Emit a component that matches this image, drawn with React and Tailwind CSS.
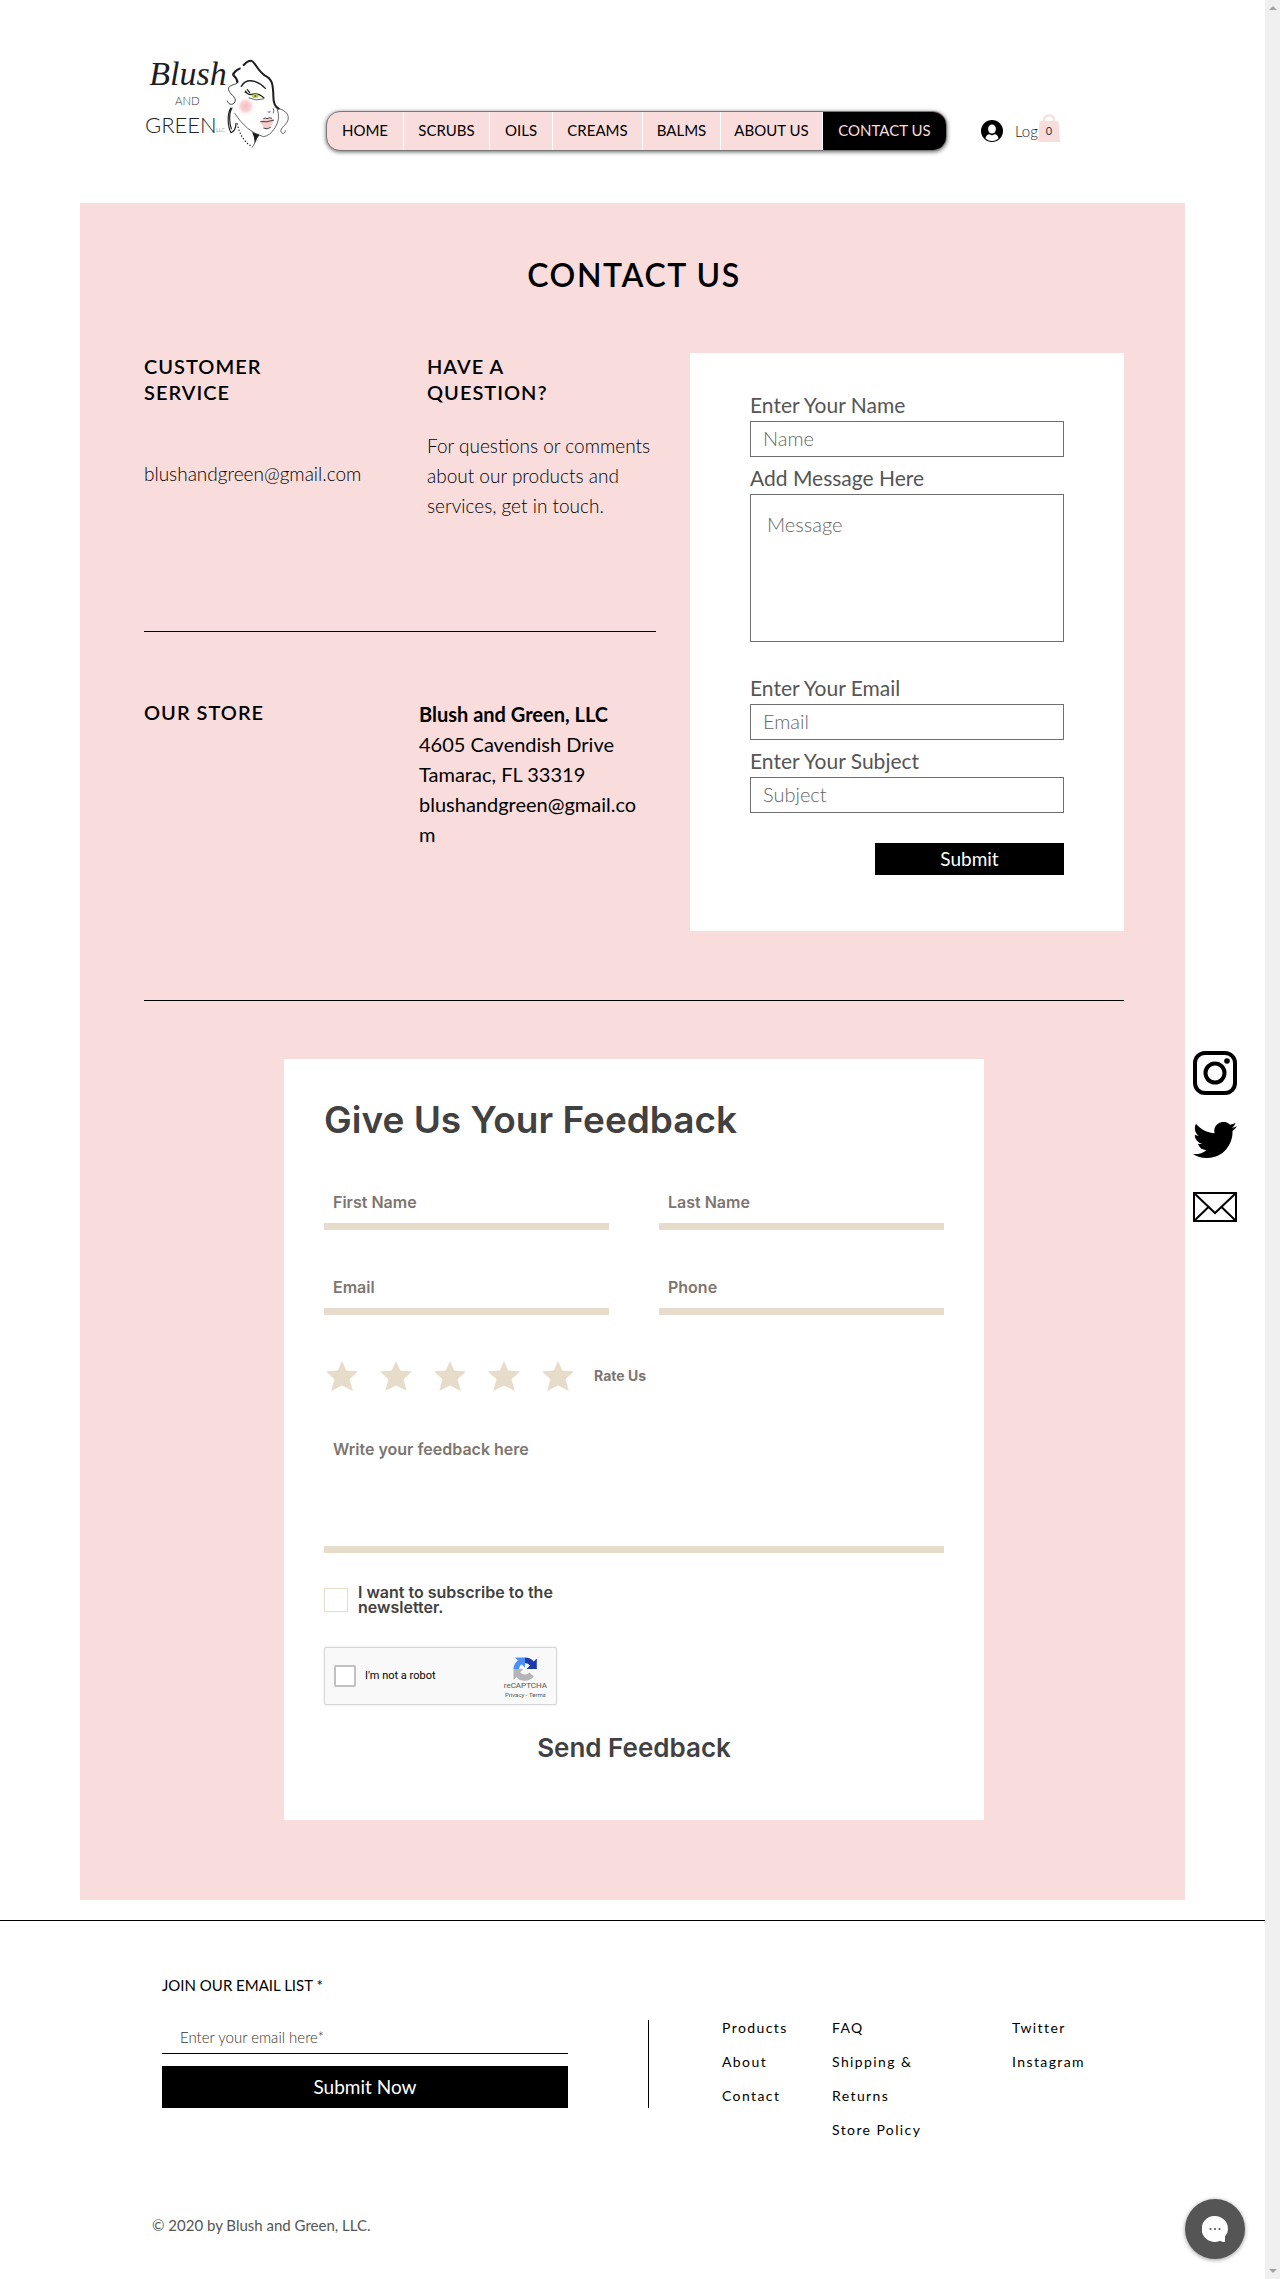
import React from "react";

const futura = "font-['Lato','Liberation_Sans',sans-serif]";
const poppins = "font-['Inter','Liberation_Sans',sans-serif]";

function Logo() {
  return (
    <svg viewBox="0 0 540 360" className="h-[120px] w-[180px] shrink-0" role="img" aria-label="Blush and Green LLC">
      <defs>
        <radialGradient id="blush">
          <stop offset="0" stopColor="#f6b9bf" />
          <stop offset="0.5" stopColor="#f9d3d6" />
          <stop offset="1" stopColor="#ffffff" stopOpacity="0" />
        </radialGradient>
      </defs>
      <text x="58" y="134" fontFamily="'Liberation Serif', serif" fontStyle="italic" fontSize="102" fill="#1d1d1d">Blush</text>
      <text x="135" y="196" fontFamily="Lato, sans-serif" fontWeight="300" fontSize="34" fill="#333">AND</text>
      <text x="45" y="279" fontFamily="Lato, sans-serif" fontWeight="300" fontSize="66" fill="#222">GREEN</text>
      <text x="258" y="277" fontFamily="Lato, sans-serif" fontWeight="300" fontSize="17" fill="#444">LLC</text>
      <circle cx="347" cy="199" r="30" fill="url(#blush)" />
      <g fill="none" stroke="#1d1d1d" strokeLinecap="round" strokeLinejoin="round">
        <path d="M341 75 Q352 62 363 62 C376 66 382 92 404 106 C430 118 428 140 430 162 C429 188 434 200 446 206" strokeWidth="6" />
        <path d="M331 84 C312 92 305 100 308 105 C316 112 324 120 324 126 C318 136 300 133 296 143 C292 158 314 166 316 180 C315 196 296 198 292 183" strokeWidth="2.5" />
        <path d="M329 86 Q312 94 310 106 Q322 116 322 127" strokeWidth="6" />
        <path d="M334 139 Q346 117 374 124 Q392 130 406 145" strokeWidth="4" />
        <path d="M347 153 Q352 164 362 164 Q384 156 402 174 M354 161 L345 156 M359 158 L352 149" strokeWidth="3.5" />
        <path d="M357 174 Q378 184 400 177" strokeWidth="2" />
        <path d="M446 206 C468 210 478 226 474 240 C468 258 450 262 453 276 C458 284 466 280 466 272" strokeWidth="2" />
        <path d="M442 208 Q452 236 436 262 Q420 288 400 290 Q350 276 314 220" strokeWidth="2" />
        <path d="M302 204 C290 226 294 262 303 278 M306 204 C296 220 298 250 304 266 M303 278 Q318 272 318 250" strokeWidth="3.5" />
        <path d="M414 216 Q420 220 421 214 M430 206 Q434 212 430 219" strokeWidth="2" />
        <path d="M322 252 Q332 300 366 320" strokeWidth="4" strokeDasharray="0.5 9" />
        <path d="M384 282 Q380 304 367 322" strokeWidth="2" />
      </g>
      <path d="M366 276 Q386 284 388 286 Q380 294 374 310 Q374 290 366 276Z" fill="#1d1d1d" />
      <ellipse cx="376" cy="168" rx="10" ry="6" fill="#b5d34f" />
      <circle cx="376" cy="168" r="3" fill="#5d6b2c" />
      <path d="M391 244 Q402 233 411 238 Q420 230 432 240 Q424 266 408 266 Q397 262 391 244Z" fill="#f5cdcb" />
      <path d="M391 245 Q410 248 432 240 M400 236 Q406 232 411 236 Q418 231 426 235 M400 264 Q412 270 422 262" fill="none" stroke="#1d1d1d" strokeWidth="2.5" />
    </svg>
  );
}

const navItems = [
  ["HOME", "w-[77px]"],
  ["SCRUBS", "w-[86px]"],
  ["OILS", "w-[63px]"],
  ["CREAMS", "w-[90px]"],
  ["BALMS", "w-[78px]"],
  ["ABOUT US", "w-[102px]"],
];

function Header() {
  return (
    <header className="mx-auto flex h-[203px] max-w-[1105px] pt-10 pl-[50px]">
      <a href="#home"><Logo /></a>
      <nav className="mt-[71px] ml-4 flex h-10 shrink-0 overflow-hidden rounded-[14px] border border-[#777] bg-[#f9dddd] text-[15px] shadow-[0_1px_4px_rgba(0,0,0,0.6)]">
        {navItems.map(([label, width]) => (
          <a key={label} href="#" className={`flex items-center justify-center border-r border-white pb-0.5 text-black ${width}`}>{label}</a>
        ))}
        <a href="#" aria-current="page" className="flex w-[123px] items-center justify-center bg-black pb-0.5 text-[#f9dddd]">CONTACT US</a>
      </nav>
      <button type="button" className="mt-[80px] ml-[34px] flex h-[22px] items-center gap-3 text-[15px] font-light text-[#222]">
        <svg viewBox="0 0 22 22" className="size-[22px]">
          <circle cx="11" cy="11" r="11" fill="#000" />
          <ellipse cx="11" cy="9" rx="3.9" ry="4.6" fill="#fff" />
          <path d="M4.5 18.5 Q5 14.5 8.6 14.3 Q11 16 13.4 14.3 Q17 14.5 17.5 18.5 Q14.5 21 11 21 Q7.500 21 4.500 18.500Z" fill="#fff" />
        </svg>
        Log
      </button>
      <button type="button" aria-label="Cart, 0 items" className="mt-[74px] h-[29px] w-[22px]">
        <svg viewBox="0 0 22 29" className="h-[29px] w-[22px]">
          <path d="M6 9 V6 Q6 1.500 11 1.500 Q16 1.500 16 6 V9" fill="none" stroke="#f9dddd" strokeWidth="2" />
          <path d="M1.500 7 H20.500 L22 28 H0Z" fill="#f9dddd" />
          <text x="11" y="21" textAnchor="middle" fontSize="11" fontFamily="Lato, sans-serif" fill="#333">0</text>
        </svg>
      </button>
    </header>
  );
}

const fieldBox = "block w-full border border-[#6f6f6f] bg-white font-light text-[#333] placeholder:text-[#666]";

function Field({ id, label, placeholder, className = "" }) {
  return (
    <div className={className}>
      <label htmlFor={id} className="mb-0.5 block text-[21px] leading-7 text-[#555]">{label}</label>
      <input id={id} placeholder={placeholder} className={`h-9 px-3 pb-0.5 text-[20px] ${fieldBox}`} />
    </div>
  );
}

function ContactForm() {
  return (
    <form className="flex w-[434px] shrink-0 flex-col bg-white px-[60px] pt-[38px] pb-14">
      <Field id="name" label="Enter Your Name" placeholder="Name" />
      <label htmlFor="message" className="mt-[7px] mb-0.5 block text-[21px] leading-7 text-[#555]">Add Message Here</label>
      <textarea id="message" placeholder="Message" className={`h-[148px] resize-none px-4 pt-[15px] text-[20px] leading-7 ${fieldBox}`} />
      <Field id="email" label="Enter Your Email" placeholder="Email" className="mt-8" />
      <Field id="subject" label="Enter Your Subject" placeholder="Subject" className="mt-[7px]" />
      <button type="button" className="mt-[30px] h-8 w-[189px] self-end bg-black text-[19px] leading-7 text-white">Submit</button>
    </form>
  );
}

function LineInput({ label }) {
  return (
    <input aria-label={label} placeholder={label} className="h-[47px] w-full border-b-[7px] border-[#e6dcc9] px-[9px] pb-0.5 text-[16px] font-semibold placeholder:text-[#7d756f]" />
  );
}

function Recaptcha() {
  return (
    <div className="mt-8 flex h-[58px] w-[233px] items-center rounded-[2px] border border-[#d6d6d6] bg-[#f9f9f9] pr-[9px] pl-[9px] font-['Roboto',sans-serif] shadow-[0_0_3px_rgba(0,0,0,0.1)]">
      <label className="flex items-center gap-[9px] text-[11px] text-black">
        <input type="checkbox" className="size-[22px] appearance-none rounded-[2px] border-2 border-[#c1c1c1] bg-white" />
        I'm not a robot
      </label>
      <div className="ml-auto flex flex-col items-center text-[#555]">
        <svg viewBox="0 0 24 24" className="mt-1 size-6">
          <path d="M12 0.500 A11.500 11.500 0 0 1 20.800 4.500 L23.800 1.600 V12 H13.500 L17 8.500 A6.500 6.500 0 0 0 12 6Z" fill="#1c3aa9" />
          <path d="M12 0.500 H2 L4.800 3.400 A11.500 11.500 0 0 0 0.500 12 H6 A6 6 0 0 1 8.500 7.200 L12 10.700Z" fill="#4a90f5" />
          <path d="M0.500 12 H10.500 L7.200 15.200 A6.200 6.200 0 0 0 16.500 15.500 L20.800 19.500 A11.500 11.500 0 0 1 3.600 20.200 L0.500 22.800Z" fill="#b4b4b4" />
        </svg>
        <span className="text-[8px] leading-[10px]">reCAPTCHA</span>
        <span className="text-[6px] leading-[8px]"><a href="#">Privacy</a> - <a href="#">Terms</a></span>
      </div>
    </div>
  );
}

function FeedbackForm() {
  return (
    <form className={`mx-auto mt-[58px] max-w-[700px] bg-white px-10 pt-[39px] pb-14 text-[#414141] ${poppins}`}>
      <h2 className="text-[37px] leading-[44px] font-semibold">Give Us Your Feedback</h2>
      <div className="mt-[41px] grid grid-cols-2 gap-x-[50px] gap-y-[38px]">
        <LineInput label="First Name" />
        <LineInput label="Last Name" />
        <LineInput label="Email" />
        <LineInput label="Phone" />
      </div>
      <div className="mt-[46px] flex items-center">
        {[1, 2, 3, 4, 5].map((n) => (
          <button key={n} type="button" aria-label={`${n} stars`} className="mr-[18px] h-[30px] w-9">
            <svg viewBox="0 0 36 30" className="h-[30px] w-9">
              <path d="M18 0 L22.300 9.600 L34 10.500 L25.500 18.200 L28.800 30 L18 24.500 L7.200 30 L10.500 18.200 L2 10.500 L13.700 9.600Z" fill="#e6dcc9" />
            </svg>
          </button>
        ))}
        <span className="text-[14px] leading-5 font-bold text-[#7d756f]">Rate Us</span>
      </div>
      <textarea aria-label="Write your feedback here" placeholder="Write your feedback here" className="mt-[43px] block h-[119px] w-full resize-none border-b-[7px] border-[#e6dcc9] px-[9px] pt-[5px] text-[16px] leading-5 font-semibold placeholder:text-[#7d756f]" />
      <label className="mt-8 flex w-[250px] items-center gap-[10px] text-[16px] leading-[15px] font-semibold">
        <input type="checkbox" className="size-6 shrink-0 appearance-none border border-[#e6dcc9] bg-white" />
        I want to subscribe to the newsletter.
      </label>
      <Recaptcha />
      <button type="button" className="mx-auto mt-[27px] block text-[26px] leading-8 font-semibold">Send Feedback</button>
    </form>
  );
}

function ContactSection() {
  const heading = "text-[20px] leading-[26px] font-semibold tracking-wider";
  return (
    <main className="mx-auto max-w-[1105px] bg-[#f9dddd] pt-[52px] pr-[61px] pb-20 pl-16 text-black">
      <h1 className="text-center text-[32px] leading-10 font-semibold tracking-wider">CONTACT US</h1>
      <div className="mt-[58px] flex gap-[34px]">
        <div className="flex-1">
          <section className="grid h-[278px] grid-cols-[283px_1fr]">
            <div>
              <h2 className={`w-[150px] ${heading}`}>CUSTOMER SERVICE</h2>
              <a href="#" className="mt-[54px] block text-[19px] leading-[30px] font-light">blushandgreen@gmail.com</a>
            </div>
            <div>
              <h2 className={`w-[150px] ${heading}`}>HAVE A QUESTION?</h2>
              <p className="mt-[26px] text-[19px] leading-[30px] font-light">
                For questions or comments<br />about our products and<br />services, get in touch.
              </p>
            </div>
          </section>
          <hr className="border-black" />
          <section className="mt-[67px] grid grid-cols-[275px_1fr]">
            <h2 className={heading}>OUR STORE</h2>
            <address className="w-[228px] text-[20px] leading-[30px] not-italic">
              <strong>Blush and Green, LLC</strong><br />
              4605 Cavendish Drive<br />
              Tamarac, FL 33319<br />
              <a href="#" className="break-all">blushandgreen@gmail.com</a>
            </address>
          </section>
        </div>
        <ContactForm />
      </div>
      <hr className="mt-[69px] border-black" />
      <FeedbackForm />
    </main>
  );
}

const linkColumns = [
  { items: ["Products", "About", "Contact"], width: "w-[110px]" },
  { items: ["FAQ", "Shipping & Returns", "Store Policy"], width: "w-[180px] pr-[70px]" },
  { items: ["Twitter", "Instagram"], width: "w-[110px]" },
];

function Footer() {
  return (
    <footer className="mt-5 border-t border-black pb-11">
      <div className="mx-auto flex max-w-[1105px] pt-[54px] pl-[82px]">
        <form className="w-[406px]">
          <label htmlFor="join" className="block text-[15px] leading-5 text-black">JOIN OUR EMAIL LIST *</label>
          <input id="join" placeholder="Enter your email here*" className="mt-[27px] block h-8 w-full border-b border-black px-[18px] pb-0.5 text-[15px] font-light placeholder:text-[#333]" />
          <button type="button" className="mt-3 h-[42px] w-full bg-black text-[19px] leading-7 text-white">Submit Now</button>
        </form>
        <div className="mt-[45px] ml-[80px] h-[88px] w-px bg-black" />
        <nav className="mt-9 ml-[73px] flex text-[14px] leading-[34px] tracking-widest text-black">
          {linkColumns.map((col) => (
            <ul key={col.items[0]} className={col.width}>
              {col.items.map((item) => (
                <li key={item}><a href="#">{item}</a></li>
              ))}
            </ul>
          ))}
        </nav>
      </div>
      <p className="mx-auto mt-[68px] max-w-[1105px] pl-[72px] text-[15px] leading-5 text-[#555]">© 2020 by Blush and Green, LLC.</p>
    </footer>
  );
}

function SocialRail() {
  return (
    <div className="absolute top-[1051px] right-7 flex w-11 flex-col">
      <a href="#" aria-label="Instagram">
        <svg viewBox="0 0 44 44" className="size-11" fill="none" stroke="#000" strokeWidth="4">
          <rect x="2" y="2" width="40" height="40" rx="10" />
          <circle cx="22" cy="22" r="9.500" />
          <circle cx="34" cy="10" r="2.800" fill="#000" stroke="none" />
        </svg>
      </a>
      <a href="#" aria-label="Twitter" className="mt-[27px]">
        <svg viewBox="0 2.250 24 19.500" className="h-9 w-11" preserveAspectRatio="none">
          <path d="M23.953 4.570a10 10 0 0 1-2.825.775 4.958 4.958 0 0 0 2.163-2.723c-.951.555-2.005.959-3.127 1.184a4.920 4.920 0 0 0-8.384 4.482C7.690 8.095 4.067 6.130 1.640 3.162a4.822 4.822 0 0 0-.666 2.475c0 1.710.870 3.213 2.188 4.096a4.904 4.904 0 0 1-2.228-.616v.060a4.923 4.923 0 0 0 3.946 4.827 4.996 4.996 0 0 1-2.212.085 4.936 4.936 0 0 0 4.604 3.417 9.867 9.867 0 0 1-6.102 2.105c-.390 0-.779-.023-1.170-.067a13.995 13.995 0 0 0 7.557 2.209c9.053 0 13.998-7.496 13.998-13.985 0-.210 0-.420-.015-.630A9.935 9.935 0 0 0 24 4.590z" fill="#000" />
        </svg>
      </a>
      <a href="#" aria-label="Email" className="mt-[34px]">
        <svg viewBox="0 0 44 30" className="h-[30px] w-11" fill="none" stroke="#000" strokeWidth="2">
          <rect x="1" y="1" width="42" height="28" />
          <path d="M1 1 L22 21 L43 1 M1 29 L15.500 15 M43 29 L28.500 15" />
        </svg>
      </a>
    </div>
  );
}

export default function App() {
  return (
    <div className={`flex bg-white ${futura}`}>
      <div className="relative min-w-0 flex-1">
        <Header />
        <ContactSection />
        <Footer />
        <SocialRail />
        <button type="button" aria-label="Open chat" className="absolute right-5 bottom-5 flex size-[60px] items-center justify-center rounded-full bg-[#555] shadow-[0_1px_4px_rgba(0,0,0,0.4)]">
          <svg viewBox="0 0 26 26" className="size-[26px]">
            <path d="M13 0 A13 13 0 0 1 26 13 Q26 17 23 20.500 V26 Q20 26 18 24.800 A13 13 0 1 1 13 0Z" fill="#fff" />
            <g fill="#555"><circle cx="8.500" cy="13" r="1.100" /><circle cx="13" cy="13" r="1.100" /><circle cx="17.500" cy="13" r="1.100" /></g>
          </svg>
        </button>
      </div>
      <div aria-hidden="true" className="flex w-[15px] shrink-0 flex-col items-center justify-between bg-[#f0f0f0] py-1.5">
        <svg viewBox="0 0 8 4" className="h-1 w-2"><path d="M0 4 L4 0 L8 4Z" fill="#a3a3a3" /></svg>
        <svg viewBox="0 0 8 4" className="h-1 w-2"><path d="M0 0 L4 4 L8 0Z" fill="#a3a3a3" /></svg>
      </div>
    </div>
  );
}
